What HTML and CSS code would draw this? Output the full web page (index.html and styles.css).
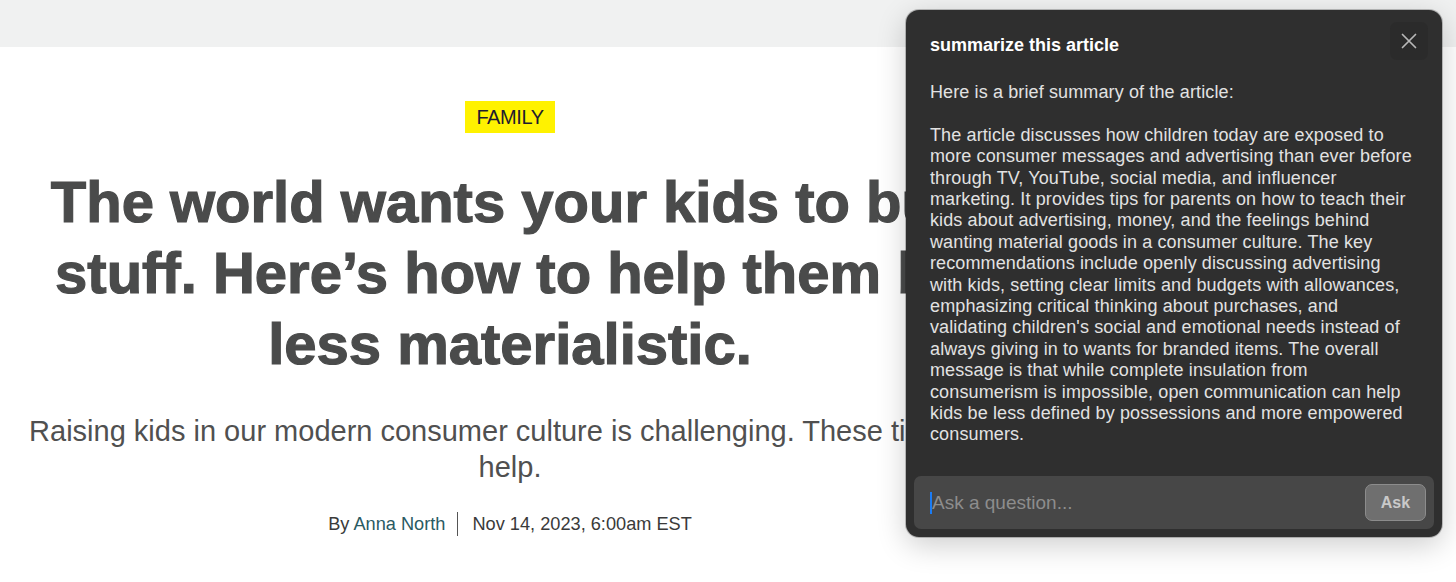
FILE: index.html
```html
<!DOCTYPE html>
<html lang="en">
<head>
<meta charset="utf-8">
<title>The world wants your kids to buy stuff</title>
<link rel="stylesheet" href="styles.css">
</head>
<body>
<header class="topbar"></header>
<main class="article">
  <div class="article-head">
    <div class="kicker"><span class="badge">FAMILY</span></div>
    <h1 class="headline">The world wants your kids to buy stuff. Here’s how to help them be less materialistic.</h1>
    <p class="dek">Raising kids in our modern consumer culture is challenging. These tips can help.</p>
    <div class="byline">By <a class="author" href="#">Anna North</a><span class="sep"></span>Nov 14, 2023, 6:00am EST</div>
  </div>
</main>
<aside class="assistant">
  <div class="assistant-header">
    <div class="assistant-title">summarize this article</div>
    <button class="close-btn" aria-label="Close">
      <svg width="16" height="16" viewBox="0 0 16 16"><path d="M1.5 1.5 L14.5 14.5 M14.5 1.5 L1.5 14.5" stroke="#b8b8b8" stroke-width="1.7" stroke-linecap="round" fill="none"/></svg>
    </button>
  </div>
  <div class="assistant-body">
    <p>Here is a brief summary of the article:</p>
    <p>The article discusses how children today are exposed to<br>more consumer messages and advertising than ever before<br>through TV, YouTube, social media, and influencer<br>marketing. It provides tips for parents on how to teach their<br>kids about advertising, money, and the feelings behind<br>wanting material goods in a consumer culture. The key<br>recommendations include openly discussing advertising<br>with kids, setting clear limits and budgets with allowances,<br>emphasizing critical thinking about purchases, and<br>validating children's social and emotional needs instead of<br>always giving in to wants for branded items. The overall<br>message is that while complete insulation from<br>consumerism is impossible, open communication can help<br>kids be less defined by possessions and more empowered<br>consumers.</p>
  </div>
  <div class="assistant-footer">
    <div class="ask-field">
      <span class="caret"></span><span class="placeholder">Ask a question...</span>
      <button class="ask-btn">Ask</button>
    </div>
  </div>
</aside>
</body>
</html>
```
FILE: styles.css
```css
html, body {
  margin: 0;
  padding: 0;
  background: #ffffff;
}
body {
  font-family: "Liberation Sans", Arial, sans-serif;
  width: 1456px;
  height: 582px;
  overflow: hidden;
  position: relative;
}
.topbar {
  height: 47px;
  background: #f0f1f1;
}
.article {
  padding-left: 20px;
}
.article-head {
  width: 980px;
  text-align: center;
  padding-top: 54px;
}
.kicker {
  display: flex;
  justify-content: center;
}
.badge {
  display: block;
  background: #fff200;
  color: #1e1b2f;
  font-size: 20px;
  letter-spacing: -0.4px;
  line-height: 32px;
  padding: 0 11px 0 11px;
}
.headline {
  margin: 33px 0 0;
  font-family: "Liberation Sans", Arial, sans-serif;
  font-weight: 700;
  font-size: 58px;
  line-height: 71px;
  color: #4a4b4b;
  -webkit-text-stroke: 1.2px #4a4b4b;
}
.dek {
  margin: 34px 0 0;
  font-size: 29px;
  line-height: 36px;
  color: #505050;
}
.byline {
  margin-top: 27px;
  font-size: 18.2px;
  line-height: 24px;
  color: #3a3a3a;
}
.author {
  color: #2a5a63;
  text-decoration: none;
}
.sep {
  display: inline-block;
  width: 1px;
  height: 24px;
  background: #555;
  vertical-align: middle;
  margin: 0 14px 0 12px;
  position: relative;
  top: -1px;
}
.assistant {
  position: absolute;
  top: 10px;
  right: 14px;
  width: 536px;
  height: 527px;
  box-sizing: border-box;
  background: #2f2f2f;
  border-radius: 13px;
  box-shadow: 0 0 0 1px rgba(0,0,0,0.22), 0 8px 30px rgba(0,0,0,0.2);
  display: flex;
  flex-direction: column;
  color: #e2e2e2;
}
.assistant-header {
  display: flex;
  justify-content: space-between;
  align-items: flex-start;
  padding: 12px 14px 0 24px;
}
.assistant-title {
  margin-top: 12px;
  font-weight: 700;
  font-size: 18px;
  line-height: 22px;
  color: #ffffff;
}
.close-btn {
  width: 38px;
  height: 38px;
  border: none;
  border-radius: 7px;
  background: #2b2b2b;
  display: flex;
  align-items: center;
  justify-content: center;
  padding: 0;
}
.assistant-body {
  flex: 1;
  padding: 0 24px;
  font-size: 18px;
  line-height: 21.4px;
  letter-spacing: 0.12px;
}
.assistant-body p {
  margin: 0 0 21.4px;
  white-space: nowrap;
}
.assistant-body p:first-child {
  margin-top: 22px;
}
.assistant-footer {
  padding: 8px;
}
.ask-field {
  height: 53px;
  background: #474747;
  border-radius: 7px;
  display: flex;
  align-items: center;
  padding: 0 8px 0 16px;
}
.caret {
  width: 2px;
  height: 22px;
  background: #1a7cf5;
}
.placeholder {
  flex: 1;
  font-size: 19px;
  color: #8d8d8d;
}
.ask-btn {
  width: 61px;
  height: 37px;
  border: 1px solid #8c8c8c;
  border-radius: 7px;
  background: #6f6f6f;
  color: #c9c9c9;
  font-family: "Liberation Sans", Arial, sans-serif;
  font-weight: 700;
  font-size: 16px;
  padding: 0;
}
```
